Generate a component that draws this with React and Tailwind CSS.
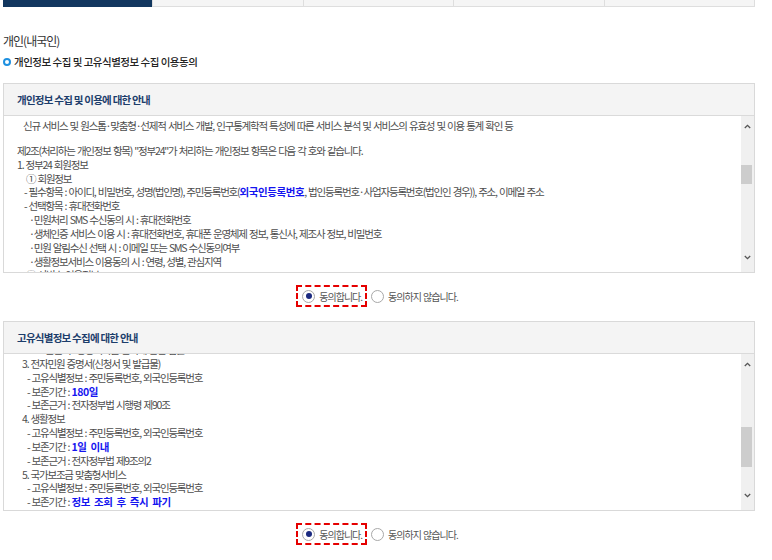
import React from 'react';

const tabs = [0, 1, 2, 3, 4];

// 약관 본문 (보이는 부분만)
const privacyLines = [
  { indent: 'pl-[6px]', text: '신규 서비스 및 원스톱·맞춤형·선제적 서비스 개발, 인구통계학적 특성에 따른 서비스 분석 및 서비스의 유효성 및 이용 통계 확인 등', gapAfter: true },
  { indent: 'pl-0', text: '제2조(처리하는 개인정보 항목) "정부24"가 처리하는 개인정보 항목은 다음 각 호와 같습니다.' },
  { indent: 'pl-0', text: '1. 정부24 회원정보' },
  { indent: 'pl-[9px]', text: '① 회원정보' },
  { indent: 'pl-[7px]', text: '- 필수항목 : 아이디, 비밀번호, 성명(법인명), 주민등록번호(', strong: '외국인등록번호', rest: ', 법인등록번호·사업자등록번호(법인인 경우)), 주소, 이메일 주소' },
  { indent: 'pl-[7px]', text: '- 선택항목 : 휴대전화번호' },
  { indent: 'pl-[12px]', text: '·민원처리 SMS 수신동의 시 : 휴대전화번호' },
  { indent: 'pl-[12px]', text: '·생체인증 서비스 이용 시 : 휴대전화번호, 휴대폰 운영체제 정보, 통신사, 제조사 정보, 비밀번호' },
  { indent: 'pl-[12px]', text: '·민원 알림수신 선택 시 : 이메일 또는 SMS 수신동의여부' },
  { indent: 'pl-[12px]', text: '·생활정보서비스 이용동의 시 : 연령, 성별, 관심지역' },
  { indent: 'pl-[9px]', text: '② 서비스 이용정보' },
];

const uniqueLines = [
  { indent: 'pl-[10px]', text: '- 보존근거 : 공공기록물 관리에 관한 법률' },
  { indent: 'pl-0', text: '3. 전자민원 증명서(신청서 및 발급물)' },
  { indent: 'pl-[5px]', text: '- 고유식별정보 : 주민등록번호, 외국인등록번호' },
  { indent: 'pl-[5px]', text: '- 보존기간 : ', strong: '180일' },
  { indent: 'pl-[5px]', text: '- 보존근거 : 전자정부법 시행령 제90조' },
  { indent: 'pl-0', text: '4. 생활정보' },
  { indent: 'pl-[5px]', text: '- 고유식별정보 : 주민등록번호, 외국인등록번호' },
  { indent: 'pl-[5px]', text: '- 보존기간 : ', strong: '1일 이내' },
  { indent: 'pl-[5px]', text: '- 보존근거 : 전자정부법 제9조의2' },
  { indent: 'pl-0', text: '5. 국가보조금 맞춤형서비스' },
  { indent: 'pl-[5px]', text: '- 고유식별정보 : 주민등록번호, 외국인등록번호' },
  { indent: 'pl-[5px]', text: '- 보존기간 : ', strong: '정보 조회 후 즉시 파기' },
];

const Line = ({ line }) => (
  <p className={`${line.indent} whitespace-nowrap leading-[13.85px] ${line.gapAfter ? 'mb-[11px]' : ''}`}>
    {line.text}
    {line.strong && (
      <strong className="font-bold text-[#1414f0] tracking-[-0.4px] [word-spacing:2px]">{line.strong}</strong>
    )}
    {line.rest}
  </p>
);

const ScrollBar = ({ thumbTop, thumbHeight }) => (
  <div className="relative w-[13px] shrink-0 bg-[#f0f0f0]">
    <svg className="absolute left-[3px] top-[8px]" width="7" height="5" viewBox="0 0 7 5">
      <path d="M0.8 4 L3.5 1.3 L6.2 4" fill="none" stroke="#555" strokeWidth="1.3" />
    </svg>
    <div className="absolute left-0 w-[11px] bg-[#cdcdcd]" style={{ top: thumbTop, height: thumbHeight }} />
    <svg className="absolute left-[3px] bottom-[12px]" width="7" height="5" viewBox="0 0 7 5">
      <path d="M0.8 1 L3.5 3.7 L6.2 1" fill="none" stroke="#555" strokeWidth="1.3" />
    </svg>
  </div>
);

const AgreeBox = ({ title, lines, bodyClass, thumbTop, thumbHeight }) => (
  <div className="border border-[#d9d9d9]">
    <div className="h-[32px] flex items-center pl-[13px] bg-[#f4f4f4] border-b border-[#dadada]">
      <h3 className="text-[10.5px] font-bold tracking-[-0.75px] text-[#1c3d6b]">{title}</h3>
    </div>
    <div className="flex h-[156px]">
      <div className={`flex-1 overflow-hidden pl-[13px] text-[10.5px] tracking-[-1.2px] [word-spacing:1px] text-[#4d4d4d] ${bodyClass}`}>
        {lines.map((line, idx) => (
          <Line key={idx} line={line} />
        ))}
      </div>
      <ScrollBar thumbTop={thumbTop} thumbHeight={thumbHeight} />
    </div>
  </div>
);

const Radio = ({ checked }) => (
  <span className="w-[13px] h-[13px] rounded-full border border-[#a8a8a8] bg-white flex items-center justify-center shrink-0">
    {checked && <span className="w-[6px] h-[6px] rounded-full bg-[#1b2a80]" />}
  </span>
);

const AgreeRadios = () => (
  <div className="flex justify-center pr-[4px]">
    <div className="flex items-center gap-[4px] text-[10px] tracking-[-1px] [word-spacing:1px] text-[#555]">
      <label className="flex items-center gap-[4px] h-[22px] pl-[4px] pr-[3px] border-2 border-dashed border-[#e50000]">
        <Radio checked />
        <span>동의합니다.</span>
      </label>
      <label className="flex items-center gap-[4px]">
        <Radio />
        <span>동의하지 않습니다.</span>
      </label>
    </div>
  </div>
);

export default function App() {
  return (
    <div className="w-[772px] h-[560px] overflow-hidden bg-white font-['Noto_Sans_CJK_KR',sans-serif]">
      <div className="ml-[3px] w-[752px]">
        {/* 상단 탭 */}
        <div className="flex h-[7px]">
          {tabs.map((t) => (
            <div
              key={t}
              className={t === 0 ? 'flex-1 bg-[#12375f]' : 'flex-1 bg-[#f5f5f5] border-l border-b border-r-0 border-[#dedede] last:border-r'}
            />
          ))}
        </div>

        <h2 className="mt-[26px] leading-[16px] text-[12px] tracking-[-1px] text-[#333]">개인(내국인)</h2>
        <div className="mt-[5px] mb-[13px] flex items-center gap-[3px] leading-[16px]">
          <span className="w-[8px] h-[8px] rounded-full border-[2px] border-[#1e90e0]" />
          <span className="text-[10.5px] font-medium tracking-[-0.5px] text-[#222]">개인정보 수집 및 고유식별정보 수집 이용동의</span>
        </div>

        <AgreeBox
          title="개인정보 수집 및 이용에 대한 안내"
          lines={privacyLines}
          bodyClass="pt-[3px]"
          thumbTop={49}
          thumbHeight={19}
        />
        <div className="mt-[12px] mb-[14px]">
          <AgreeRadios />
        </div>

        <AgreeBox
          title="고유식별정보 수집에 대한 안내"
          lines={uniqueLines}
          bodyClass="pt-0 [&>p:first-child]:-mt-[11px] pl-[18px]"
          thumbTop={73}
          thumbHeight={40}
        />
        <div className="mt-[12px]">
          <AgreeRadios />
        </div>
      </div>
    </div>
  );
}
